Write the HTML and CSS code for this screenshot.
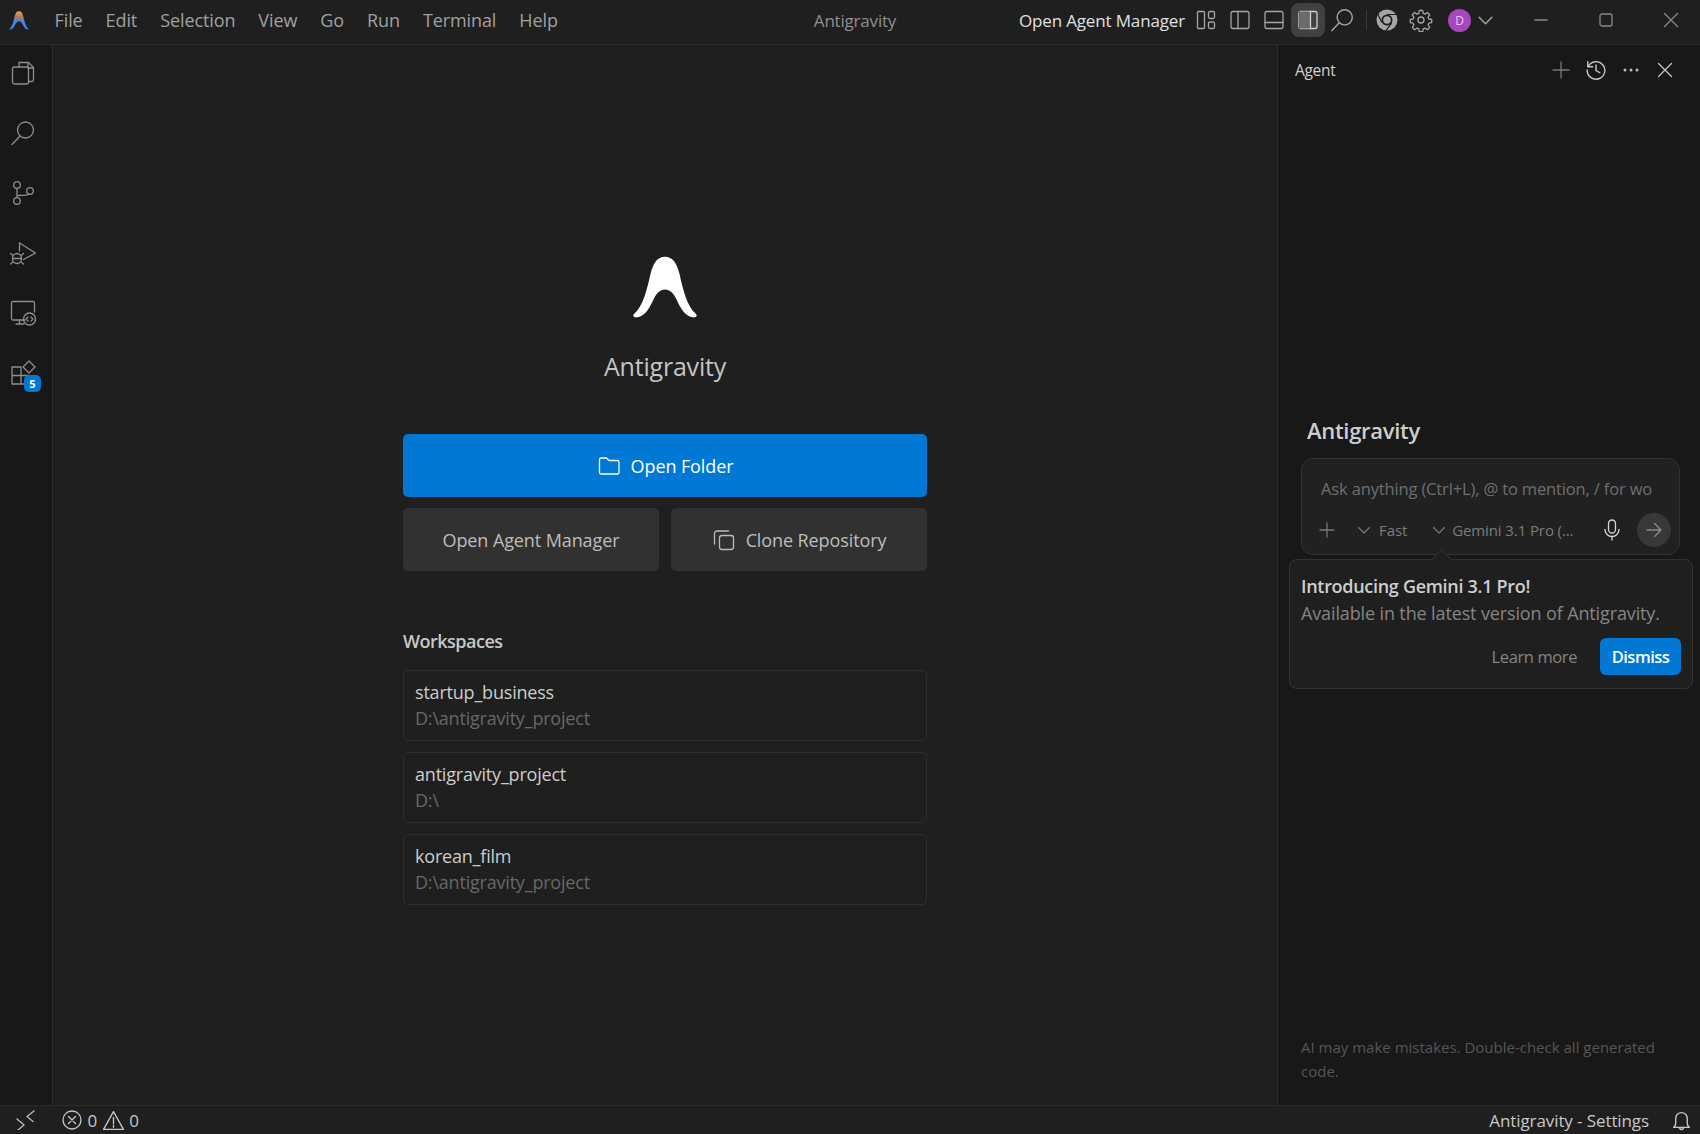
FILE: index.html
```html
<!DOCTYPE html>
<html lang="en">

<head>
    <meta charset="UTF-8">
    <meta name="viewport" content="width=device-width, initial-scale=1.0">
    <title>Antigravity</title>
    <link rel="stylesheet" href="styles.css">
</head>

<body>
    <div class="app">
        <header class="titlebar">
            <div class="menu">
                <svg class="app-logo" viewBox="-4 -2 192 182">
                    <defs>
                        <linearGradient id="logo-grad" x1="0" y1="0" x2="0" y2="1">
                            <stop offset="0" stop-color="#e8b04a" />
                            <stop offset="0.3" stop-color="#b9725f" />
                            <stop offset="0.55" stop-color="#4a86e8" />
                            <stop offset="1" stop-color="#2f7de1" />
                        </linearGradient>
                    </defs>
                    <path fill="url(#logo-grad)"
                        d="M92 0C70 0 58 18 50 50C40 95 28 145 3 165C-3 172 3 177 12 175C32 172 44 155 58 125C68 105 78 95 92 95C106 95 116 105 126 125C140 155 152 172 172 175C181 177 187 172 181 165C156 145 144 95 134 50C126 18 114 0 92 0Z" />
                </svg>
                <span class="menu-item">File</span>
                <span class="menu-item">Edit</span>
                <span class="menu-item">Selection</span>
                <span class="menu-item">View</span>
                <span class="menu-item">Go</span>
                <span class="menu-item">Run</span>
                <span class="menu-item">Terminal</span>
                <span class="menu-item">Help</span>
            </div>
            <div class="window-title">Antigravity</div>
            <div class="title-actions">
                <span class="title-link">Open Agent Manager</span>
                <button class="title-icon">
                    <svg viewBox="0 0 24 24" width="24" height="24" class="line">
                        <rect x="3.5" y="3.5" width="7" height="17" rx="1" />
                        <rect x="14.5" y="3.5" width="6" height="7" rx="1.5" />
                        <rect x="14.5" y="14" width="6" height="6.5" rx="1.5" />
                    </svg>
                </button>
                <button class="title-icon">
                    <svg viewBox="0 0 24 24" width="24" height="24" class="line">
                        <rect x="3" y="3.5" width="18" height="17" rx="2" />
                        <path d="M10 3.5v17" />
                    </svg>
                </button>
                <button class="title-icon">
                    <svg viewBox="0 0 24 24" width="24" height="24" class="line">
                        <rect x="3" y="3.5" width="18" height="17" rx="2" />
                        <path d="M3 14.5h18" />
                    </svg>
                </button>
                <button class="title-icon is-active">
                    <svg viewBox="0 0 24 24" width="24" height="24" class="line">
                        <rect x="3" y="3.5" width="18" height="17" rx="2" />
                        <rect x="3" y="3.5" width="11" height="17" class="fill-dim" />
                        <path d="M14.5 3.5v17" />
                    </svg>
                </button>
                <button class="title-icon">
                    <svg viewBox="0 0 24 24" width="26" height="26" class="line">
                        <circle cx="14.5" cy="9.5" r="7" />
                        <path d="M9.5 14.5L2.5 22" />
                    </svg>
                </button>
                <span class="title-divider"></span>
                <button class="title-icon">
                    <svg viewBox="0 0 24 24" width="24" height="24">
                        <circle cx="12" cy="12" r="10.5" fill="#a6a6a6" />
                        <circle cx="12" cy="12" r="5.5" fill="#1f1f1f" />
                        <circle cx="12" cy="12" r="3.8" fill="#a6a6a6" />
                        <path d="M12 6.5H22M7.2 14.8L2.6 6M16.8 14.8L11 22.6" stroke="#1f1f1f" stroke-width="1.2" fill="none" />
                    </svg>
                </button>
                <button class="title-icon">
                    <svg viewBox="0 0 24 24" width="24" height="24" class="line">
                        <circle cx="12" cy="12" r="3" />
                        <path d="M10.3 2.5h3.4l.5 2.8 1.8.8 2.4-1.6 2.3 2.3-1.6 2.4.8 1.8 2.8.5v3.2l-2.8.5-.8 1.8 1.6 2.4-2.3 2.3-2.4-1.6-1.8.8-.5 2.8h-3.4l-.5-2.8-1.8-.8-2.4 1.6-2.3-2.3 1.6-2.4-.8-1.8-2.8-.5v-3.2l2.8-.5.8-1.8-1.6-2.4 2.3-2.3 2.4 1.6 1.8-.8z" />
                    </svg>
                </button>
                <span class="avatar">D</span>
                <svg class="line avatar-caret" viewBox="0 0 16 16" width="17" height="17">
                    <path d="M2 5l6 6 6-6" />
                </svg>
                <div class="window-controls">
                    <button class="window-button">
                        <svg viewBox="0 0 16 16" width="16" height="16" class="line"><path d="M2 8h12" /></svg>
                    </button>
                    <button class="window-button">
                        <svg viewBox="0 0 16 16" width="16" height="16" class="line"><rect x="2" y="2" width="12" height="12" rx="2" /></svg>
                    </button>
                    <button class="window-button">
                        <svg viewBox="0 0 16 16" width="16" height="16" class="line"><path d="M1.5 1.5l13 13M14.5 1.5l-13 13" /></svg>
                    </button>
                </div>
            </div>
        </header>

        <div class="workbench">
            <nav class="activity-bar">
                <div class="activity-icon">
                    <svg viewBox="0 0 26 26" width="26" height="26" class="line">
                        <path d="M9 7V2.5h9.5l5 5V20a1.5 1.5 0 0 1-1.5 1.5h-3.500" />
                        <path d="M18 2.500V8h5.500" />
                        <rect x="2.500" y="7" width="16" height="17" rx="2" />
                    </svg>
                </div>
                <div class="activity-icon">
                    <svg viewBox="0 0 26 26" width="26" height="26" class="line">
                        <circle cx="15.500" cy="10" r="8" />
                        <path d="M10 16L2 24.500" />
                    </svg>
                </div>
                <div class="activity-icon">
                    <svg viewBox="0 0 26 26" width="26" height="26" class="line">
                        <circle cx="7" cy="5" r="3.300" />
                        <circle cx="7" cy="21" r="3.300" />
                        <circle cx="20" cy="11" r="3.300" />
                        <path d="M7 8.300V17.700M7 15.500c7 0 12-.5 12.500-1.500" />
                    </svg>
                </div>
                <div class="activity-icon">
                    <svg viewBox="0 0 26 26" width="26" height="26" class="line">
                        <path d="M9.500 3l16 10-12 6.500" />
                        <path d="M9.500 3v8" />
                        <ellipse cx="7" cy="18.500" rx="4.500" ry="5" />
                        <path d="M2.500 18.500h9M.5 13.500l2.500 2M13.500 13.500l-2.500 2M.5 24l2.500-2M13.500 24l-2.500-2" />
                    </svg>
                </div>
                <div class="activity-icon">
                    <svg viewBox="0 0 26 26" width="26" height="26" class="line">
                        <path d="M15 20H3a1.500 1.500 0 0 1-1.500-1.500V3A1.500 1.500 0 0 1 3 1.500h20A1.500 1.500 0 0 1 24.500 3v9" />
                        <path d="M6 24h8M9.500 20v4" />
                        <circle cx="19.500" cy="19" r="6" />
                        <path d="M18 17l-2 2 2 2M21 17l2 2-2 2" />
                    </svg>
                </div>
                <div class="activity-icon">
                    <svg viewBox="0 0 26 26" width="26" height="26" class="line">
                        <path d="M2 7h9v17H2zM2 15.500h18V24H11" />
                        <path d="M19 1l6 6-6 6-6-6z" />
                    </svg>
                    <span class="badge">5</span>
                </div>
            </nav>

            <main class="welcome">
                <div class="welcome-inner">
                    <svg class="welcome-logo" viewBox="-4 -2 192 182" width="68" height="63">
                        <path fill="#ffffff"
                            d="M92 0C70 0 58 18 50 50C40 95 28 145 3 165C-3 172 3 177 12 175C32 172 44 155 58 125C68 105 78 95 92 95C106 95 116 105 126 125C140 155 152 172 172 175C181 177 187 172 181 165C156 145 144 95 134 50C126 18 114 0 92 0Z" />
                    </svg>
                    <h1 class="welcome-title">Antigravity</h1>

                    <button class="btn btn-primary">
                        <svg viewBox="0 0 24 24" width="24" height="24" class="line">
                            <path d="M2.500 5.500A1.500 1.500 0 0 1 4 4h5.500l2.500 2.500h8.500A1.500 1.500 0 0 1 22 8v10.500a1.500 1.500 0 0 1-1.500 1.500H4a1.500 1.500 0 0 1-1.500-1.500z" />
                        </svg>
                        Open Folder
                    </button>
                    <div class="btn-row">
                        <button class="btn btn-secondary">Open Agent Manager</button>
                        <button class="btn btn-secondary">
                            <svg viewBox="0 0 24 24" width="24" height="24" class="line">
                                <rect x="7.500" y="7.500" width="14" height="14" rx="2.500" />
                                <path d="M16.500 3H5a2.500 2.500 0 0 0-2.500 2.500V16" />
                            </svg>
                            Clone Repository
                        </button>
                    </div>

                    <h2 class="workspaces-title">Workspaces</h2>
                    <ul class="workspace-list">
                        <li class="workspace">
                            <div class="workspace-name">startup_business</div>
                            <div class="workspace-path">D:\antigravity_project</div>
                        </li>
                        <li class="workspace">
                            <div class="workspace-name">antigravity_project</div>
                            <div class="workspace-path">D:\</div>
                        </li>
                        <li class="workspace">
                            <div class="workspace-name">korean_film</div>
                            <div class="workspace-path">D:\antigravity_project</div>
                        </li>
                    </ul>
                </div>
            </main>

            <aside class="agent-panel">
                <div class="agent-header">
                    <span>Agent</span>
                    <div class="agent-actions">
                        <svg viewBox="0 0 20 20" width="20" height="20" class="line dim"><path d="M10 2v16M2 10h16" /></svg>
                        <svg viewBox="0 0 20 20" width="22" height="22" class="line">
                            <path d="M3 6.500A8 8 0 1 1 2 10" />
                            <path d="M2.500 2.500v4.500H7M10 5.500V10.500l3.500 2" />
                        </svg>
                        <svg viewBox="0 0 20 20" width="20" height="20" class="dots">
                            <circle cx="4" cy="10" r="1.500" />
                            <circle cx="10" cy="10" r="1.500" />
                            <circle cx="16" cy="10" r="1.500" />
                        </svg>
                        <svg viewBox="0 0 20 20" width="20" height="20" class="line"><path d="M3.500 3.500l13 13M16.500 3.500l-13 13" /></svg>
                    </div>
                </div>

                <h2 class="agent-title">Antigravity</h2>
                <div class="agent-input">
                    <div class="agent-placeholder">Ask anything (Ctrl+L), @ to mention, / for wo</div>
                    <div class="agent-toolbar">
                        <svg viewBox="0 0 16 16" width="16" height="16" class="line dim plus-icon"><path d="M8 1v14M1 8h14" /></svg>
                        <svg viewBox="0 0 14 14" width="14" height="14" class="line dim"><path d="M1.500 4.500L7 10l5.500-5.500" /></svg>
                        <span class="mode">Fast</span>
                        <svg viewBox="0 0 14 14" width="14" height="14" class="line dim"><path d="M1.500 4.500L7 10l5.500-5.500" /></svg>
                        <span class="model">Gemini 3.1 Pro (...</span>
                        <svg viewBox="0 0 24 24" width="24" height="24" class="line mic">
                            <rect x="8.500" y="2" width="7" height="13" rx="3.500" class="mic-body" />
                            <path d="M5 11.500a7 7 0 0 0 14 0M12 18.500V22" />
                        </svg>
                        <button class="send">
                            <svg viewBox="0 0 18 18" width="18" height="18" class="line"><path d="M2 9h14M9.500 2.500L16 9l-6.500 6.500" /></svg>
                        </button>
                    </div>
                    <div class="popup">
                        <span class="popup-arrow"></span>
                        <div class="popup-title">Introducing Gemini 3.1 Pro!</div>
                        <div class="popup-text">Available in the latest version of Antigravity.</div>
                        <div class="popup-actions">
                            <span class="popup-link">Learn more</span>
                            <button class="dismiss">Dismiss</button>
                        </div>
                    </div>
                </div>

                <p class="agent-note">AI may make mistakes. Double-check all generated code.</p>
            </aside>
        </div>

        <footer class="statusbar">
            <svg viewBox="0 0 20 20" width="20" height="20" class="line remote">
                <path d="M1 9l7 6-6 5M18 1l-7 5.500 6 5" />
            </svg>
            <svg viewBox="0 0 20 20" width="20" height="20" class="line status-error">
                <circle cx="10" cy="10" r="9" />
                <path d="M6.500 6.500l7 7M13.500 6.500l-7 7" />
            </svg>
            <span class="status-count">0</span>
            <svg viewBox="0 0 20 20" width="21" height="21" class="line status-warn">
                <path d="M10 1.500L19.500 18.500H.5z" />
                <path d="M10 7v6M10 14.500v2" />
            </svg>
            <span class="status-count">0</span>
            <span class="status-right">Antigravity - Settings</span>
            <svg viewBox="0 0 20 20" width="21" height="21" class="line bell">
                <path d="M2.500 16.500c1.500-1 2-2 2-4V8a5.500 5.500 0 0 1 11 0v4.500c0 2 .5 3 2 4z" />
                <path d="M8 16.500c0 2.700 4 2.700 4 0" />
            </svg>
        </footer>
    </div>
</body>

</html>
```

FILE: styles.css
```css
* {
    box-sizing: border-box;
}

html,
body {
    margin: 0;
    height: 100%;
    overflow: hidden;
}

body {
    font-family: "Open Sans", "Noto Sans", sans-serif;
    background-color: #1f1f1f;
    color: #cccccc;
}

button {
    font-family: inherit;
    border: none;
    background: none;
    color: inherit;
    padding: 0;
}

ul {
    list-style: none;
    margin: 0;
    padding: 0;
}

svg {
    display: block;
    flex-shrink: 0;
}

.line {
    fill: none;
    stroke: currentColor;
    stroke-width: 1.3;
    stroke-linecap: round;
    stroke-linejoin: round;
}

.dim {
    color: #777777;
}

.dots {
    fill: #bbbbbb;
}

.app {
    display: flex;
    flex-direction: column;
    height: 1134px;
}

/* title bar */
.titlebar {
    display: grid;
    grid-template-columns: 1fr auto 1fr;
    align-items: center;
    height: 45px;
    flex-shrink: 0;
    padding-bottom: 5px;
    background-color: #1f1f1f;
    border-bottom: 1px solid #2b2b2b;
}

.menu {
    display: flex;
    align-items: center;
}

.app-logo {
    width: 20px;
    height: 19px;
    margin-left: 9px;
    margin-right: 14px;
}

.menu-item {
    padding: 0 11.500px;
    font-size: 18px;
    letter-spacing: -0.1px;
    color: #a0a0a0;
}

.window-title {
    padding-left: 10px;
    font-size: 17px;
    letter-spacing: -0.2px;
    color: #8f8f8f;
}

.title-actions {
    display: flex;
    align-items: center;
    justify-content: flex-end;
    color: #a6a6a6;
}

.title-link {
    margin-right: 4px;
    font-size: 17px;
    letter-spacing: -0.15px;
    color: #e0e0e0;
}

.title-icon {
    display: flex;
    align-items: center;
    justify-content: center;
    width: 34px;
    height: 34px;
    border-radius: 8px;
}

.title-icon.is-active {
    background-color: #414141;
    color: #cfcfcf;
}

.fill-dim {
    fill: #6a6a6a;
    stroke: none;
}

.title-divider {
    width: 1px;
    height: 20px;
    margin: 0 3px 0 7px;
    background-color: #3a3a3a;
}

.avatar {
    display: flex;
    align-items: center;
    justify-content: center;
    width: 23px;
    height: 23px;
    margin-left: 10px;
    border-radius: 50%;
    background-color: #a846bf;
    color: #e8c8ef;
    font-size: 12px;
}

.avatar-caret {
    margin-left: 6px;
    margin-right: 14px;
}

.window-controls {
    display: flex;
    margin-right: -3px;
}

.window-button {
    display: flex;
    align-items: center;
    justify-content: center;
    width: 65px;
    height: 40px;
    color: #8a8a8a;
}

/* main area */
.workbench {
    display: flex;
    flex: 1;
    min-height: 0;
}

.activity-bar {
    width: 53px;
    flex-shrink: 0;
    padding: 15px 0 0 10px;
    background-color: #181818;
    border-right: 1px solid #2b2b2b;
    color: #8e8e8e;
}

.activity-icon {
    position: relative;
    width: 26px;
    height: 26px;
    margin-bottom: 34px;
}

.badge {
    position: absolute;
    right: -5px;
    bottom: -6px;
    width: 17px;
    height: 17px;
    border-radius: 5px;
    background-color: #0078d4;
    color: #ffffff;
    font-size: 11px;
    font-weight: 700;
    line-height: 17px;
    text-align: center;
}

.welcome {
    flex: 1;
    display: flex;
    justify-content: center;
    padding-top: 211px;
}

.welcome-inner {
    display: flex;
    flex-direction: column;
    width: 524px;
}

.welcome-logo {
    align-self: center;
}

.welcome-title {
    margin: 30px 0 51px;
    font-size: 25px;
    font-weight: 400;
    letter-spacing: -0.2px;
    line-height: 34px;
    text-align: center;
    color: #c4c4c4;
}

.btn {
    display: flex;
    align-items: center;
    justify-content: center;
    gap: 10px;
    height: 63px;
    border-radius: 5px;
    font-size: 18px;
    letter-spacing: -0.1px;
}

.btn-primary {
    background-color: #0078d4;
    color: #ffffff;
}

.btn-row {
    display: flex;
    gap: 12px;
    margin-top: 11px;
}

.btn-secondary {
    flex: 1;
    background-color: #313131;
    color: #bdbdbd;
}

.workspaces-title {
    margin: 56px 0 15px;
    font-size: 18px;
    font-weight: 600;
    letter-spacing: -0.5px;
    line-height: 28px;
    color: #c8c8c8;
}

.workspace-list {
    display: flex;
    flex-direction: column;
    gap: 11px;
}

.workspace {
    height: 71px;
    padding: 8px 11px 0;
    border: 1px solid #2f2f2f;
    border-radius: 5px;
    font-size: 18px;
    letter-spacing: -0.2px;
    line-height: 26px;
}

.workspace-name {
    color: #cccccc;
}

.workspace-path {
    color: #686868;
}

/* agent side panel */
.agent-panel {
    display: flex;
    flex-direction: column;
    width: 423px;
    flex-shrink: 0;
    padding: 0 12px 0 12px;
    background-color: #181818;
    border-left: 1px solid #2b2b2b;
}

.agent-header {
    display: flex;
    align-items: center;
    justify-content: space-between;
    height: 50px;
    padding: 0 13px 0 5px;
    font-size: 15.500px;
    letter-spacing: -0.3px;
    color: #cfcfcf;
}

.agent-actions {
    display: flex;
    align-items: center;
    gap: 14px;
    color: #c4c4c4;
}

.agent-title {
    margin: 319px 0 12px 17px;
    font-size: 22px;
    font-weight: 600;
    letter-spacing: -0.3px;
    line-height: 32px;
    color: #cdcdcd;
}

.agent-input {
    position: relative;
    height: 97px;
    margin: 0 8px 0 11px;
    padding: 17px 17px 0 19px;
    background-color: #212121;
    border: 1px solid #333333;
    border-radius: 12px;
}

.agent-placeholder {
    overflow: hidden;
    white-space: nowrap;
    font-size: 16.500px;
    letter-spacing: -0.15px;
    line-height: 26px;
    color: #6f6f6f;
}

.agent-toolbar {
    display: flex;
    align-items: center;
    gap: 8px;
    height: 38px;
    margin-top: 9px;
    margin-left: -2px;
    margin-right: -9px;
    color: #7c7c7c;
    font-size: 15px;
    letter-spacing: -0.1px;
}

.plus-icon {
    margin-right: 14px;
}

.mode {
    margin-right: 17px;
}

.model {
    flex: 1;
    margin-left: -2px;
    white-space: nowrap;
}

.mic {
    color: #d8d8d8;
    margin-right: 5px;
}

.mic-body {
    fill: none;
}

.send {
    display: flex;
    align-items: center;
    justify-content: center;
    width: 34px;
    height: 34px;
    border-radius: 50%;
    background-color: #38383b;
    color: #8d8d8d;
}

.popup {
    position: absolute;
    top: 100px;
    left: -13px;
    width: 404px;
    height: 130px;
    padding: 13px 11px;
    background-color: #1f1f1f;
    border: 1px solid #333333;
    border-radius: 8px;
    z-index: 2;
}

.popup-arrow {
    position: absolute;
    top: -8px;
    left: 144px;
    width: 15px;
    height: 15px;
    transform: rotate(45deg);
    background-color: #1f1f1f;
    border-top: 1px solid #333333;
    border-left: 1px solid #333333;
}

.popup-title {
    font-size: 18px;
    font-weight: 600;
    letter-spacing: -0.3px;
    line-height: 27px;
    color: #cecece;
}

.popup-text {
    font-size: 18px;
    letter-spacing: -0.13px;
    line-height: 27px;
    color: #858585;
}

.popup-actions {
    display: flex;
    align-items: center;
    justify-content: flex-end;
    gap: 23px;
    margin-top: 11px;
}

.popup-link {
    font-size: 16.500px;
    letter-spacing: -0.4px;
    color: #858585;
}

.dismiss {
    width: 81px;
    height: 37px;
    border-radius: 6px;
    background-color: #0078d4;
    color: #ffffff;
    font-size: 16.500px;
    font-weight: 600;
    letter-spacing: -0.5px;
}

.agent-note {
    margin: auto 12px 22px 11px;
    font-size: 15px;
    letter-spacing: 0;
    line-height: 24px;
    color: #565656;
}

/* status bar */
.statusbar {
    display: flex;
    align-items: center;
    height: 29px;
    flex-shrink: 0;
    padding-left: 16px;
    background-color: #1f1f1f;
    border-top: 1px solid #2b2b2b;
    font-size: 17px;
    letter-spacing: -0.1px;
    color: #c8c8c8;
}

.remote {
    margin-right: 26px;
    color: #bcbcbc;
}

.status-count {
    margin: 0 5.500px;
}

.status-right {
    margin-left: auto;
    margin-right: 22px;
}

.bell {
    margin-right: 8px;
}
```
